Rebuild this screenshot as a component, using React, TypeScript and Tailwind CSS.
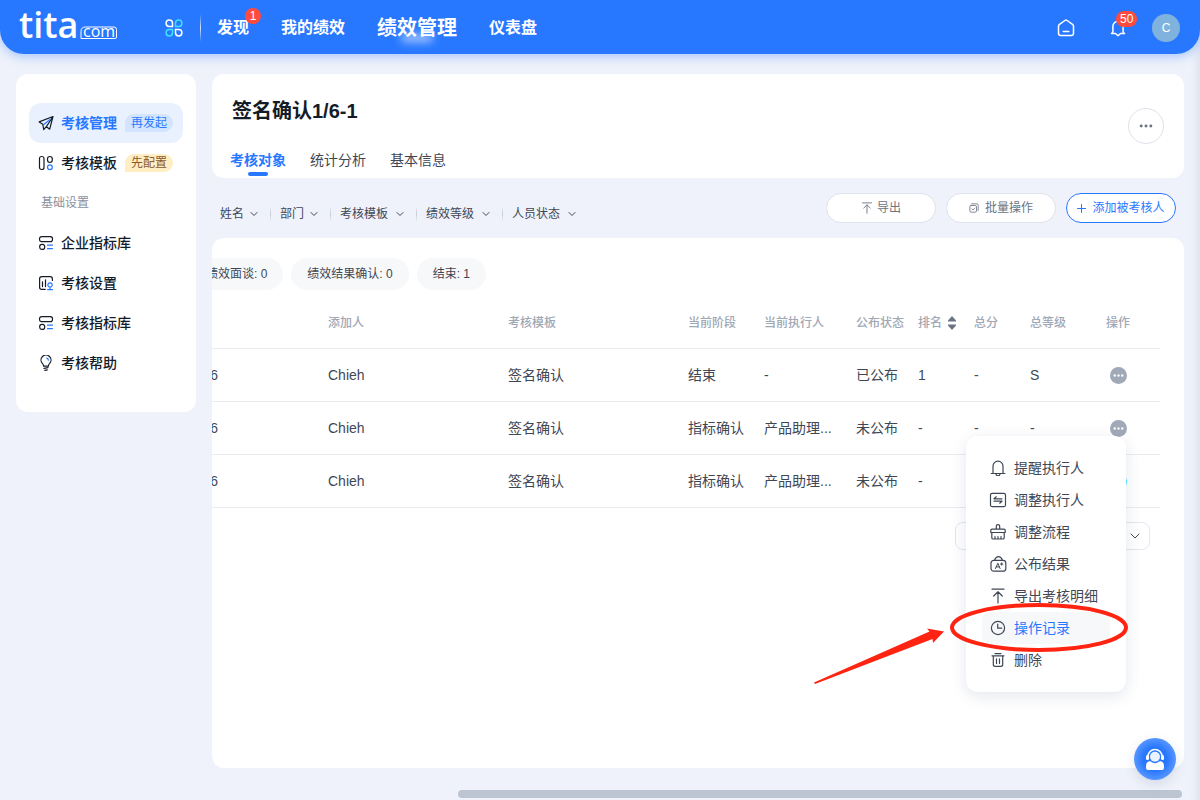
import React from 'react'
import { ChevronDown } from 'lucide-react'

const line = {
  fill: 'none',
  stroke: 'currentColor',
  strokeLinecap: 'round' as const,
  strokeLinejoin: 'round' as const,
}

const Logo = () => (
  <svg width="100" height="52" viewBox="0 0 100 52" className="overflow-visible text-white" role="img" aria-label="tita.com">
    <text x="-1" y="36" fontFamily="'Open Sans', sans-serif" fontSize="36" fontWeight="600" fill="currentColor">tita</text>
    <path d="M61 36.500V29.500q0-4.500 4.500-4.500H94q2.500 0 2.500 2.500v7.500q0 1.500-1.500 1.500H61z" fill="none" stroke="currentColor" />
    <text x="63" y="35" fontFamily="'Open Sans', sans-serif" fontSize="16" fill="currentColor">com</text>
  </svg>
)

const AppsIcon = () => (
  <svg width="18" height="18" viewBox="0 0 18 18" fill="none" strokeWidth="1.5">
    <path d="M7.500 7.500H4.300A3.200 3.200 0 1 1 7.500 4.300z" stroke="#fff" />
    <path d="M10.500 7.500V4.300a3.200 3.200 0 1 1 3.200 3.200z" stroke="#3fe0ff" />
    <path d="M7.500 10.500v3.200a3.200 3.200 0 1 1-3.200-3.200z" stroke="#3fe0ff" />
    <path d="M10.500 10.500h3.200a3.200 3.200 0 1 1-3.200 3.200z" stroke="#fff" />
  </svg>
)

const HomeIcon = () => (
  <svg width="18" height="18" viewBox="0 0 18 18" {...line} strokeWidth="1.500">
    <path d="M1.500 7.200Q1.500 6 2.500 5.300L7.900 1.500q1.100-.8 2.200 0l5.400 3.800q1 .7 1 1.900v7q0 2.300-2.300 2.300H3.800q-2.300 0-2.300-2.300z" />
    <path d="M6.200 12.500h5.600" />
  </svg>
)

const NoticeIcon = () => (
  <svg width="16" height="18" viewBox="0 0 16 18" {...line} strokeWidth="1.500">
    <path d="M1.500 14.500h2.200M14.500 14.500H12M2.900 13.800V7.300a5.100 5.100 0 0 1 10.200 0v6.500M1.500 14.500l1.400-1.200M14.500 14.500l-1.400-1.200M3.700 14.500H5.500L8 16.800l2.500-2.300H12" />
  </svg>
)

const PlaneIcon = () => (
  <svg width="16" height="16" viewBox="0 0 16 16" {...line} strokeWidth="1.200">
    <path d="M8.400 11.700L15 1.500 1.200 6.900l3.600 2.300M15 1.500l-3.300 12.700-3.300-2.500-2.700 2.800-.9-5.300" />
    <path d="M12 4.500L5.500 9.700" stroke="#2878ff" />
  </svg>
)

const TemplateIcon = () => (
  <svg width="16" height="16" viewBox="0 0 16 16" {...line} strokeWidth="1.200">
    <rect x="1.500" y="1.500" width="4.500" height="13" rx="2" />
    <rect x="9.500" y="1.500" width="4.800" height="6" rx="2.400" />
    <circle cx="11.900" cy="12.200" r="2.400" stroke="#2878ff" />
  </svg>
)

const LibraryIcon = () => (
  <svg width="16" height="16" viewBox="0 0 16 16" {...line} strokeWidth="1.200">
    <rect x="1.500" y="1.600" width="13" height="5" rx="2.200" />
    <rect x="1.700" y="9.400" width="5" height="5" rx="2.200" />
    <path d="M9.500 10.200h5M9.500 13.600h5" stroke="#2878ff" />
  </svg>
)

const SettingIcon = () => (
  <svg width="16" height="16" viewBox="0 0 16 16" {...line} strokeWidth="1.200">
    <path d="M14.400 5.500V3.700q0-2.100-2.100-2.100H3.700q-2.100 0-2.100 2.100v8.600q0 2.100 2.100 2.100h3.500M4.500 6.800v4.800M7.500 4.800v6.800" />
    <path d="M12 12.200a2.200 2.200 0 1 1 .1 0zM12 12.200v2.300M9.500 14.600h5" stroke="#2878ff" />
  </svg>
)

const BulbIcon = () => (
  <svg width="16" height="16" viewBox="0 0 16 16" {...line} strokeWidth="1.200">
    <path d="M5.600 11.200Q5.600 9.600 4.300 8.400a5 5 0 1 1 7.400 0q-1.300 1.200-1.300 2.800zM6 13.300l4-.6M6.800 15.400l2.500-.5" />
    <path d="M8.700 3.200q1.500.3 1.700 1.900" stroke="#2878ff" />
  </svg>
)

const ExportIcon = ({ size = 16 }: { size?: number }) => (
  <svg width={size} height={size} viewBox="0 0 16 16" {...line} strokeWidth="1.200">
    <path d="M2 1.200h12M8 15V4M3.700 8L8 3.800 12.300 8" />
  </svg>
)

const BatchIcon = () => (
  <svg width="10" height="10" viewBox="0 0 12 12" {...line}>
    <path d="M3 1h6.500Q11 1 11 2.500V9" />
    <rect x="1" y="3" width="8" height="8" rx="1.500" />
    <path d="M3.300 7l1.500 1.500L7 6" />
  </svg>
)

const PlusIcon = () => (
  <svg width="9" height="9" viewBox="0 0 9 9" {...line}>
    <path d="M4.500.5v8M.5 4.500h8" />
  </svg>
)

const BellIcon = () => (
  <svg width="16" height="16" viewBox="0 0 16 16" {...line} strokeWidth="1.200">
    <path d="M1.200 13.500h13.600M3 13.300V6.200a5 5 0 0 1 10 0v7.100M6 13.800a2 2 0 0 0 4 0" />
  </svg>
)

const SwapIcon = () => (
  <svg width="18" height="16" viewBox="0 0 18 16" className="shrink-0" {...line} strokeWidth="1.200">
    <rect x="1.500" y="1.300" width="15" height="13.400" rx="1.800" />
    <path d="M13 6.800H5L7.300 4.800M5 9.200h8l-2.300 2" />
  </svg>
)

const FlowIcon = () => (
  <svg width="16" height="16" viewBox="0 0 16 16" {...line} strokeWidth="1.200">
    <path d="M6.300 5V2.300a1.700 1.700 0 0 1 3.400 0V5M2 5.200h12q1.200 0 1.200 1v2.300H.8V6.200q0-1 1.200-1zM1.800 8.500v5.200q0 1.300 1.300 1.300h9.800q1.300 0 1.300-1.300V8.500M5 14.800v-2.300M8 14.800v-2.300M11 14.800v-2.300" />
  </svg>
)

const ResultIcon = () => (
  <svg width="18" height="16" viewBox="0 0 18 16" className="shrink-0" {...line} strokeWidth="1.200">
    <path d="M5.500 4.300Q7 .7 9.500.7t4 3.600" />
    <rect x="2" y="4.300" width="14.800" height="10.900" rx="2.800" />
    <path d="M6.500 12.500l2.300-5.300 2.300 5.300M7.300 10.900h3M12.700 6.800v2.400M11.500 8h2.400" strokeWidth="1" />
  </svg>
)

const ClockIcon = () => (
  <svg width="16" height="16" viewBox="0 0 16 16" {...line} strokeWidth="1.200">
    <circle cx="8" cy="8" r="6.600" />
    <path d="M7.700 4v4.200h4" />
  </svg>
)

const TrashIcon = () => (
  <svg width="16" height="16" viewBox="0 0 16 16" {...line} strokeWidth="1.200">
    <path d="M2 3.800h12M5 1.600h6M3.300 4v8.500q0 1.900 1.900 1.900h5.600q1.900 0 1.900-1.900V4M6.500 6.800v4.700M9.500 6.800v4.700" />
  </svg>
)

const Dots = ({ size }: { size: number }) => (
  <svg width={size} height={size} viewBox="0 0 16 16" fill="currentColor">
    <circle cx="2.500" cy="8" r="1.700" />
    <circle cx="8" cy="8" r="1.700" />
    <circle cx="13.500" cy="8" r="1.700" />
  </svg>
)

const SupportIcon = () => (
  <svg width="22" height="24" viewBox="0 0 22 24" fill="none">
    <path d="M4 9.500a7 7 0 0 1 14 0" stroke="#fff" strokeWidth="1.600" />
    <rect x="2" y="8" width="3" height="5" rx="1.500" fill="#fff" />
    <rect x="17" y="8" width="3" height="5" rx="1.500" fill="#fff" />
    <circle cx="11" cy="9.800" r="5" fill="#e9f2ff" />
    <path d="M5.500 14.300q1.500 0 2.500 1 3 1.700 6 0 1-1 2.500-1 3.500.5 3.500 5V21q0 2-2 2H4q-2 0-2-2v-1.700q0-4.500 3.500-5z" fill="#fff" />
  </svg>
)

const sideItems = [
  { label: '企业指标库', icon: <LibraryIcon /> },
  { label: '考核设置', icon: <SettingIcon /> },
  { label: '考核指标库', icon: <LibraryIcon /> },
  { label: '考核帮助', icon: <BulbIcon /> },
]

const filters = [
  { name: '姓名', width: 'w-[50px]' },
  { name: '部门', width: 'w-[50px]' },
  { name: '考核模板', width: 'w-[76px]' },
  { name: '绩效等级', width: 'w-[76px]' },
  { name: '人员状态', width: 'w-[76px]' },
]

const rows = [
  { stage: '结束', executor: '-', status: '已公布', rank: '1', score: '-', grade: 'S', dot: 'bg-[#a0a9b8]' },
  { stage: '指标确认', executor: '产品助理...', status: '未公布', rank: '-', score: '-', grade: '-', dot: 'bg-[#a0a9b8]' },
  { stage: '指标确认', executor: '产品助理...', status: '未公布', rank: '-', score: '', grade: '', dot: 'bg-[#3fe0ff]' },
]

const menuItems = [
  { label: '提醒执行人', icon: <BellIcon /> },
  { label: '调整执行人', icon: <SwapIcon /> },
  { label: '调整流程', icon: <FlowIcon /> },
  { label: '公布结果', icon: <ResultIcon /> },
  { label: '导出考核明细', icon: <ExportIcon /> },
  { label: '操作记录', icon: <ClockIcon />, active: true },
  { label: '删除', icon: <TrashIcon /> },
]

const Header = () => (
  <header className="flex h-[54px] items-center justify-between rounded-b-3xl bg-[#2878ff] px-5 pt-0.5 text-white shadow-[0_2px_12px_rgba(40,120,255,0.4)]">
    <div className="flex items-center">
      <Logo />
      <button type="button" aria-label="应用" className="ml-[45px]">
        <AppsIcon />
      </button>
      <span className="ml-[17px] h-7 w-px bg-linear-to-b from-white/0 via-white/80 to-white/0" />
      <nav className="ml-4 flex items-center gap-8 text-base font-bold">
        <a href="#" className="relative">
          发现
          <span className="absolute -top-2 -right-3 flex size-4 items-center justify-center rounded-full bg-[#ff4b3e] text-xs font-normal">1</span>
        </a>
        <a href="#">我的绩效</a>
        <a href="#" className="relative text-xl">
          <span className="absolute bottom-0 left-6 h-2 w-8 rounded-full bg-white/60 blur-xs" />
          <span className="relative">绩效管理</span>
        </a>
        <a href="#">仪表盘</a>
      </nav>
    </div>
    <div className="flex items-center">
      <button type="button" aria-label="首页">
        <HomeIcon />
      </button>
      <button type="button" aria-label="通知" className="relative ml-[35px]">
        <NoticeIcon />
        <span className="absolute -top-2 left-1.5 flex h-4 items-center rounded-full bg-[#ff4b3e] px-1 text-xs">50</span>
      </button>
      <span className="ml-[26px] flex size-7 items-center justify-center rounded-full bg-[#7fb2dc] text-xs">C</span>
    </div>
  </header>
)

const Sidebar = () => (
  <aside className="w-[180px] shrink-0 self-start rounded-xl bg-white px-[13px] py-[29px] text-sm font-medium text-[#141c28]">
    <a href="#" className="flex h-10 items-center rounded-xl bg-[#e9f1ff] pl-[9px]">
      <PlaneIcon />
      <span className="ml-[7px] font-bold text-[#2878ff]">考核管理</span>
      <span className="ml-2 rounded-full rounded-bl-sm bg-[#d3e4ff] px-1.5 text-xs leading-[18px] font-normal text-[#2878ff]">再发起</span>
    </a>
    <a href="#" className="flex h-10 items-center pl-[9px]">
      <TemplateIcon />
      <span className="ml-[7px]">考核模板</span>
      <span className="ml-2 rounded-full rounded-bl-sm bg-[#ffeec4] px-1.5 text-xs leading-[18px] font-normal text-[#8a5a2b]">先配置</span>
    </a>
    <p className="flex h-10 items-center pl-3 text-xs font-normal text-[#89919f]">基础设置</p>
    {sideItems.map((item) => (
      <a href="#" key={item.label} className="flex h-10 items-center gap-[7px] pl-[9px]">
        {item.icon}
        <span>{item.label}</span>
      </a>
    ))}
  </aside>
)

const TitleCard = () => (
  <section className="flex h-[104px] items-center justify-between rounded-xl bg-white pr-5">
    <div className="flex h-full flex-col justify-between pt-[23px] pb-0.5 pl-[18px]">
      <h1 className="pl-0.5 text-xl leading-7 font-bold text-[#141c28]">签名确认1/6-1</h1>
      <nav className="flex gap-6 text-sm leading-5 text-[#3f4755]">
        <a href="#" className="flex flex-col items-center gap-0.5 font-bold text-[#2878ff]">
          考核对象
          <span className="h-1 w-5 rounded-sm bg-[#2878ff]" />
        </a>
        <a href="#">统计分析</a>
        <a href="#">基本信息</a>
      </nav>
    </div>
    <button type="button" aria-label="更多" className="flex size-9 items-center justify-center rounded-full border border-[#dfe2ea] text-[#6b7482]">
      <Dots size={14} />
    </button>
  </section>
)

const Toolbar = () => (
  <div className="flex h-[60px] items-center justify-between px-2 text-xs">
    <div className="flex items-center pt-3 text-[#3f4755]">
      {filters.map((item, i) => (
        <React.Fragment key={item.name}>
          {i > 0 && <span className="mr-[9px] h-4 w-px bg-linear-to-b from-[#c5cbd8]/0 via-[#c5cbd8] to-[#c5cbd8]/0" />}
          <button type="button" className={`flex items-center justify-between pr-2.5 ${item.width}`}>
            {item.name}
            <ChevronDown size={12} strokeWidth={2} />
          </button>
        </React.Fragment>
      ))}
    </div>
    <div className="flex gap-2.5">
      <button type="button" className="flex h-[30px] w-[110px] items-center justify-center gap-1 rounded-full border border-[#dfe2ea] bg-white text-[#6b7482]">
        <ExportIcon size={12} />
        导出
      </button>
      <button type="button" className="flex h-[30px] w-[110px] items-center justify-center gap-1.5 rounded-full border border-[#dfe2ea] bg-white text-[#6b7482]">
        <BatchIcon />
        批量操作
      </button>
      <button type="button" className="flex h-[30px] w-[110px] items-center justify-center gap-1.5 rounded-full border border-[#2878ff] bg-white text-[#2878ff]">
        <PlusIcon />
        添加被考核人
      </button>
    </div>
  </div>
)

const ObjectTable = () => (
  <table className="mt-2 w-full table-fixed text-left text-sm text-[#3f4755]">
    <thead className="text-xs text-[#a0a7b5]">
      <tr className="h-[50px] border-b border-[#e9ebf0]">
        <th scope="col" aria-label="日期"></th>
        <th scope="col" className="w-[180px] font-medium">添加人</th>
        <th scope="col" className="w-[180px] font-medium">考核模板</th>
        <th scope="col" className="w-[76px] font-medium">当前阶段</th>
        <th scope="col" className="w-[92px] font-medium">当前执行人</th>
        <th scope="col" className="w-[62px] font-medium">公布状态</th>
        <th scope="col" className="w-14 font-medium">
          <button type="button" className="flex items-center gap-1.5">
            排名
            <svg width="8" height="14" viewBox="0 0 8 14" fill="#6b7482">
              <path d="M4 0l4 4.500v1H0v-1zM4 14l4-4.500v-1H0v1z" />
            </svg>
          </button>
        </th>
        <th scope="col" className="w-14 font-medium">总分</th>
        <th scope="col" className="w-[46px] font-medium">总等级</th>
        <th scope="col" className="w-[84px] text-center font-medium">操作</th>
      </tr>
    </thead>
    <tbody>
      {rows.map((row, i) => (
        <tr key={i} className="h-[53px] border-b border-[#e9ebf0]">
          <td>
            <span className="flex w-1.5 justify-end overflow-hidden">6</span>
          </td>
          <td>Chieh</td>
          <td>签名确认</td>
          <td>{row.stage}</td>
          <td className="whitespace-nowrap">{row.executor}</td>
          <td>{row.status}</td>
          <td>{row.rank}</td>
          <td>{row.score}</td>
          <td>{row.grade}</td>
          <td className="pt-0.5">
            <button type="button" aria-label="操作" className={`mx-auto flex size-[17px] items-center justify-center rounded-full text-white ${row.dot}`}>
              <Dots size={11} />
            </button>
          </td>
        </tr>
      ))}
    </tbody>
  </table>
)

const RowMenu = () => (
  <div className="absolute top-[198px] right-[58px] w-40 rounded-xl bg-white p-4 text-sm text-[#3f4755] shadow-[0_4px_16px_rgba(60,80,130,0.14)]">
    {menuItems.map((item) => (
      <button
        type="button"
        key={item.label}
        className={item.active ? 'flex h-8 w-full items-center gap-2 rounded-lg bg-[#f7f8fa] pl-2' : 'flex h-8 w-full items-center gap-2 pl-2'}
      >
        <span className="flex w-4 shrink-0 justify-center">{item.icon}</span>
        <span className={item.active ? 'whitespace-nowrap text-[#2878ff]' : 'whitespace-nowrap'}>{item.label}</span>
      </button>
    ))}
    {/* callout around 操作记录 */}
    <svg width="320" height="90" viewBox="0 0 320 90" className="pointer-events-none absolute top-[164px] -left-[156px] max-w-none">
      <ellipse cx="229" cy="27.500" rx="87" ry="22.500" fill="none" stroke="#ff2412" strokeWidth="4" />
      <path d="M4 82.500L119.500 31.500 117 28.500 134 31.500 123 43 122.500 39 5 84z" fill="#ff2412" />
    </svg>
  </div>
)

const App = () => {
  return (
    <div className="flex min-h-screen flex-col bg-[#eff2fa] font-['Liberation_Sans','Noto_Sans_CJK_SC',sans-serif] shadow-[inset_-10px_0_8px_-8px_rgba(60,80,130,0.12)]">
      <Header />
      <div className="flex flex-1 gap-4 px-4 pt-5">
        <Sidebar />
        <main className="flex min-w-0 flex-1 flex-col">
          <TitleCard />
          <Toolbar />
          <section className="relative flex-1 overflow-hidden rounded-xl bg-white pt-5 pr-6">
            <div className="-ml-[22px] flex gap-2 text-xs text-[#3f4755]">
              <span className="rounded-full bg-[#f7f8fa] px-4 leading-8">绩效面谈: 0</span>
              <span className="rounded-full bg-[#f7f8fa] px-4 leading-8">绩效结果确认: 0</span>
              <span className="rounded-full bg-[#f7f8fa] px-4 leading-8">结束: 1</span>
            </div>
            <ObjectTable />
            <div className="mt-3.5 flex justify-end pr-2.5">
              <div className="flex h-7 w-[195px] items-center rounded-lg border border-[#e4e7ee] pr-1.5">
                <select aria-label="每页条数" className="h-full flex-1 appearance-none bg-transparent">
                  <option></option>
                </select>
                <ChevronDown size={16} strokeWidth={1.5} className="text-[#3f4755]" />
              </div>
            </div>
            <RowMenu />
          </section>
        </main>
      </div>
      <div className="h-8 pt-[22px] pr-[18px] pl-[458px]">
        <div className="h-2 rounded-full bg-[#bdc4d2]" />
      </div>
      <button
        type="button"
        aria-label="客服"
        className="fixed right-6 bottom-5 flex size-[42px] items-center justify-center rounded-full bg-radial from-[#2878ff] from-40% to-[#7fb0ff] shadow-[0_4px_12px_rgba(60,80,130,0.15)]"
      >
        <SupportIcon />
      </button>
    </div>
  )
}

export default App
